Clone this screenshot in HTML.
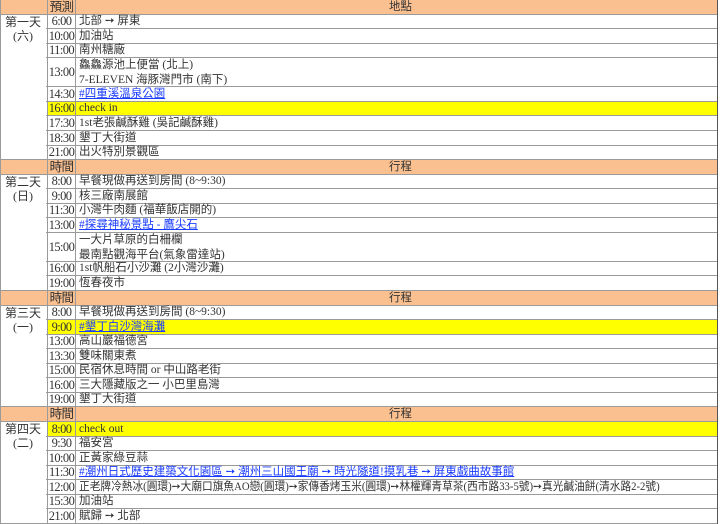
<!DOCTYPE html>
<html><head><meta charset="utf-8"><style>
body{margin:0;width:720px;height:524px;overflow:hidden;background:#fff;font-family:"Liberation Serif","Noto Sans CJK TC",serif;font-size:12px;color:#333}
.r{position:absolute;left:0;width:718px;border-bottom:1px solid #9a9a9a;box-sizing:border-box}
.c2{position:absolute;left:47px;width:28px;text-align:center;border-left:1px solid #9a9a9a;height:100%;box-sizing:border-box;letter-spacing:-0.6px;font-size:12.5px}
.c3{position:absolute;left:75px;right:0;border-left:1px solid #9a9a9a;height:100%;padding-left:3px;box-sizing:border-box;white-space:nowrap;font-size:11.5px}
.h{background:#fac090}
.y .c2,.y .c3{background:#ffff00}
a{color:#1a3cff;text-decoration:underline}
.frame{position:absolute;left:0;top:0;width:718px;height:524px;border-left:1px solid #9a9a9a;border-right:1px solid #555;box-sizing:border-box;pointer-events:none}
.day{position:absolute;left:0;width:46px;text-align:center;line-height:14px;font-size:12px}
.sq{display:inline-block;transform:scaleX(0.93);transform-origin:left center}
</style></head><body>
<div id="t"></div>
<script>
const R=14.55;
const rows=[
[0,1,'h','預測','<span style="margin-left:310px">地點</span>'],
[1,1,'','6:00','北部 ➙ 屏東'],
[2,1,'','10:00','加油站'],
[3,1,'','11:00','南州糖廠'],
[4,2,'','13:00','鱻鱻源池上便當 (北上)<br>7-ELEVEN 海豚灣門市 (南下)'],
[6,1,'','14:30','<a>#四重溪溫泉公園</a>'],
[7,1,'y','16:00','check in'],
[8,1,'','17:30','1st老張鹹酥雞 (吳記鹹酥雞)'],
[9,1,'','18:30','墾丁大街道'],
[10,1,'','21:00','出火特別景觀區'],
[11,1,'h','時間','<span style="margin-left:310px">行程</span>'],
[12,1,'','8:00','早餐現做再送到房間 (8~9:30)'],
[13,1,'','9:00','核三廠南展館'],
[14,1,'','11:30','小灣牛肉麵 (福華飯店開的)'],
[15,1,'','13:00','<a>#探尋神秘景點 - 鷹尖石</a>'],
[16,2,'','15:00','一大片草原的白柵欄<br>最南點觀海平台(氣象雷達站)'],
[18,1,'','16:00','1st帆船石小沙灘 (2小灣沙灘)'],
[19,1,'','19:00','恆春夜市'],
[20,1,'h','時間','<span style="margin-left:310px">行程</span>'],
[21,1,'','8:00','早餐現做再送到房間 (8~9:30)'],
[22,1,'y','9:00','<a>#墾丁白沙灣海灘</a>'],
[23,1,'','13:00','高山巖福德宮'],
[24,1,'','13:30','雙味關東煮'],
[25,1,'','15:00','民宿休息時間 or 中山路老街'],
[26,1,'','16:00','三大隱藏版之一 小巴里島灣'],
[27,1,'','19:00','墾丁大街道'],
[28,1,'h','時間','<span style="margin-left:310px">行程</span>'],
[29,1,'y','8:00','check out'],
[30,1,'','9:30','福安宮'],
[31,1,'','10:00','正黃家綠豆蒜'],
[32,1,'','11:30','<a>#潮州日式歷史建築文化園區 ➙ 潮州三山國王廟 ➙ 時光隧道!摸乳巷 ➙ 屏東戲曲故事館</a>'],
[33,1,'','12:00','<span class="sq">正老牌冷熱冰(圓環)➙大廟口旗魚AO戀(圓環)➙家傳香烤玉米(圓環)➙林權輝青草茶(西市路33-5號)➙真光鹹油餅(清水路2-2號)</span>'],
[34,1,'','15:30','加油站'],
[35,1,'','21:00','賦歸 ➙ 北部'],
];
let h='';
for(const [i,n,cls,t,txt] of rows){
 const top=Math.round(i*R), bot=Math.round((i+n)*R);
 const hh=bot-top;
 const lh=n==2?Math.round(hh/2):hh-1;
 h+=`<div class="r ${cls}" style="top:${top}px;height:${hh}px;line-height:${lh}px">
 <div class="c2" style="line-height:${hh-1}px">${t}</div><div class="c3">${txt}</div></div>`;
}
const days=[[1,11,'第一天','(六)'],[12,20,'第二天','(日)'],[21,28,'第三天','(一)'],[29,36,'第四天','(二)']];
for(const [a,b,d,w] of days){
 const top=Math.round(a*R), bot=Math.round((b)*R);
 h+=`<div class="day" style="top:${top}px;height:${bot-top-1}px;background:#fff;border-bottom:1px solid #9a9a9a"><div>${d}</div><div>${w}</div></div>`;
}
h+='<div class="frame"></div>';
document.getElementById('t').innerHTML=h;
</script>
</body></html>
